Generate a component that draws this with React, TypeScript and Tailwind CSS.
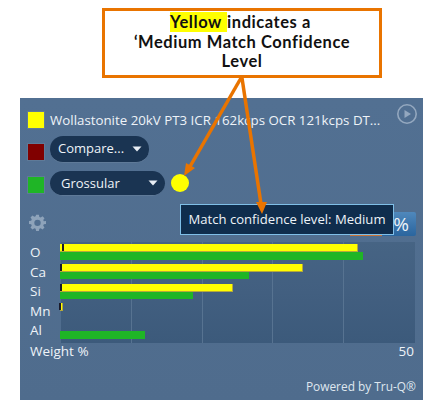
import React from "react";

const rows = [
  { label: "O", y: "w-[298px]", g: "w-[303px]", tick: "ml-[2px]" },
  { label: "Ca", y: "w-[243px]", g: "w-[189px]", tick: "ml-[0px]" },
  { label: "Si", y: "w-[173px]", g: "w-[133px]", tick: "ml-[0px]" },
  { label: "Mn", y: "w-[3px]", g: "", tick: "ml-[-1px]" },
  { label: "Al", y: "", g: "w-[85px]", tick: "" },
];

function Swatch({ color, extra }: { color: string; extra?: string }) {
  return <div className={`w-[18px] h-[18px] shrink-0 border border-[#5f7a98] ${color} ${extra ?? ""}`} />;
}

function Caret() {
  return (
    <svg width="10" height="6" viewBox="0 0 10 6" className="shrink-0">
      <path d="M0.5 0.5H9.5L5 5.5Z" fill="#e8eef5" />
    </svg>
  );
}

export default function App() {
  return (
    <div className="relative w-[445px] h-[417px] bg-white overflow-hidden pt-2 font-['Open_Sans',sans-serif]">
      <div className="ml-[102px] w-[280px] h-[70px] border-[3px] border-[#e97400] bg-white flex flex-col items-center pt-[2px] font-['Lato',sans-serif] font-bold text-[16.5px] leading-[19.5px] text-[#111] tracking-[0.55px]">
        <div className="ml-[-3px]">
          <span className="bg-[#ffff00] pr-[1px]">Yellow </span>indicates a
        </div>
        <div>‘Medium Match Confidence</div>
        <div>Level</div>
      </div>

      <div className="mt-[20px] ml-[20px] w-[403px] h-[302px] bg-gradient-to-b from-[#527092] to-[#4f6c8d] flex flex-col pl-[7px] pr-[7px] pt-[13px] font-['Open_Sans',sans-serif] text-[#eef3f8]">
        <div className="flex items-center h-[18px] relative">
          <Swatch color="bg-[#ffff00]" />
          <span className="ml-[5px] mt-[1px] text-[13.3px] whitespace-nowrap">
            Wollastonite 20kV PT3 ICR 162kcps OCR 121kcps DT...
          </span>
          <svg width="22" height="22" viewBox="0 0 22 22" className="absolute right-[-2px] top-[-8px]">
            <circle cx="11" cy="11" r="9.2" fill="none" stroke="#94a8bf" strokeWidth="1.6" />
            <path d="M8.5 7L15 11L8.5 15Z" fill="#94a8bf" />
          </svg>
        </div>

        <div className="flex items-start mt-[7px] h-[27px]">
          <Swatch color="bg-[#800000]" extra="mt-[7px]" />
          <div className="ml-[5px] w-[99px] h-[27px] rounded-[13px] bg-[#1a3452] border-b border-[#5f7a98] flex items-center justify-between pl-[8px] pr-[7px] text-[13px]">
            <span>Compare...</span>
            <Caret />
          </div>
        </div>

        <div className="flex items-start mt-[8px] h-[25px]">
          <Swatch color="bg-[#1fb526]" extra="mt-[5px]" />
          <div className="ml-[5px] w-[115px] h-[25px] rounded-[13px] bg-[#1a3452] border-b border-[#5f7a98] flex items-center justify-between pl-[11px] pr-[7px] text-[13px]">
            <span className="mt-[1px]">Grossular</span>
            <Caret />
          </div>
          <div className="ml-[6px] mt-[3px] w-[18px] h-[18px] rounded-full bg-[#ffff00]" />
        </div>

        <div className="flex items-center justify-between mt-[16px] h-[24px] pl-[2px]">
          <svg width="17" height="17" viewBox="0 0 24 24" fill="#8ea3ba" className="mt-[-3px]">
            <path
              fillRule="evenodd"
              d="M10 1h4l.6 3.1 1.9.8 2.6-1.8 2.8 2.8-1.8 2.6.8 1.9L24 10v4l-3.1.6-.8 1.9 1.8 2.6-2.8 2.8-2.6-1.8-1.9.8L14 24h-4l-.6-3.1-1.9-.8-2.6 1.8-2.8-2.8 1.8-2.6-.8-1.9L0 14v-4l3.1-.6.8-1.9L2.1 4.9l2.8-2.8 2.6 1.8 1.9-.8L10 1Zm2 7a4.5 4.5 0 1 0 0 9 4.5 4.5 0 0 0 0-9Z"
            />
          </svg>
          <div className="flex items-end h-[24px]">
            <div className="w-[32px] h-[24px] border-b-[2px] border-[#c9743a]" />
            <div className="w-[34px] h-[24px] rounded-r-[2px] bg-gradient-to-b from-[#4f88bc] to-[#2a659e] flex items-center justify-end pr-[7px] text-[19px] leading-none">
              %
            </div>
          </div>
        </div>

        <div className="flex flex-col mt-[6px] pl-[3px] text-[13.5px]">
          <div className="flex">
            <div className="w-[31px] flex flex-col pt-[1px]">
              {rows.map((r) => (
                <div key={r.label} className="h-[19.6px] leading-[19.6px]">{r.label}</div>
              ))}
            </div>
            <div className="grid w-[354px] h-[98px]">
              <div className="[grid-area:1/1] grid grid-cols-5 bg-gradient-to-b from-[#466484] via-[#425f80] to-[#3c5a7b]">
                <div className="border-r border-[#577391]" />
                <div className="border-r border-[#577391]" />
                <div className="border-r border-[#577391]" />
                <div className="border-r border-[#577391]" />
                <div />
              </div>
              <div className="[grid-area:1/1] flex flex-col pt-[2px] ml-[-1px]">
                {rows.map((r) => (
                  <div key={r.label} className="h-[19.8px] flex flex-col">
                    <div className={`h-[8px] ${r.y ? `${r.y} bg-[#ffff00] border-r border-b border-[#b5a93a]` : ""}`}>
                      {r.y && <div className={`w-[2px] h-[7px] bg-[#1a1a2a] ${r.tick}`} />}
                    </div>
                    <div className={`h-[7.5px] ${r.g} ${r.g ? "bg-[#1fb526]" : ""}`} />
                  </div>
                ))}
              </div>
            </div>
          </div>
          <div className="flex justify-between h-[20px] leading-[20px] pr-[2px]">
            <span>Weight %</span>
            <span>50</span>
          </div>
        </div>

        <div className="mt-auto mb-[6px] pr-[0px] text-right text-[11.9px] leading-[16px] text-[#dfe7ef]">
          Powered by Tru-Q®
        </div>
      </div>

      {/* tooltip floating above the panel */}
      <div className="absolute left-[180px] top-[204px] w-[214px] h-[31px] bg-[#0f2d4d] border border-[#7fbfe8] flex items-center justify-center text-[13.1px] text-[#eef3f8] whitespace-nowrap">
        Match confidence level: Medium
      </div>

      {/* callout arrows */}
      <svg width="445" height="417" className="absolute left-0 top-0 pointer-events-none">
        <line x1="241" y1="78" x2="188" y2="170" stroke="#e97400" strokeWidth="3.5" />
        <path d="M184 176L186 163L195 168Z" fill="#e97400" />
        <line x1="242" y1="78" x2="261" y2="204" stroke="#e97400" strokeWidth="3.5" />
        <path d="M262 214L256 202L267 202Z" fill="#e97400" />
      </svg>
    </div>
  );
}
